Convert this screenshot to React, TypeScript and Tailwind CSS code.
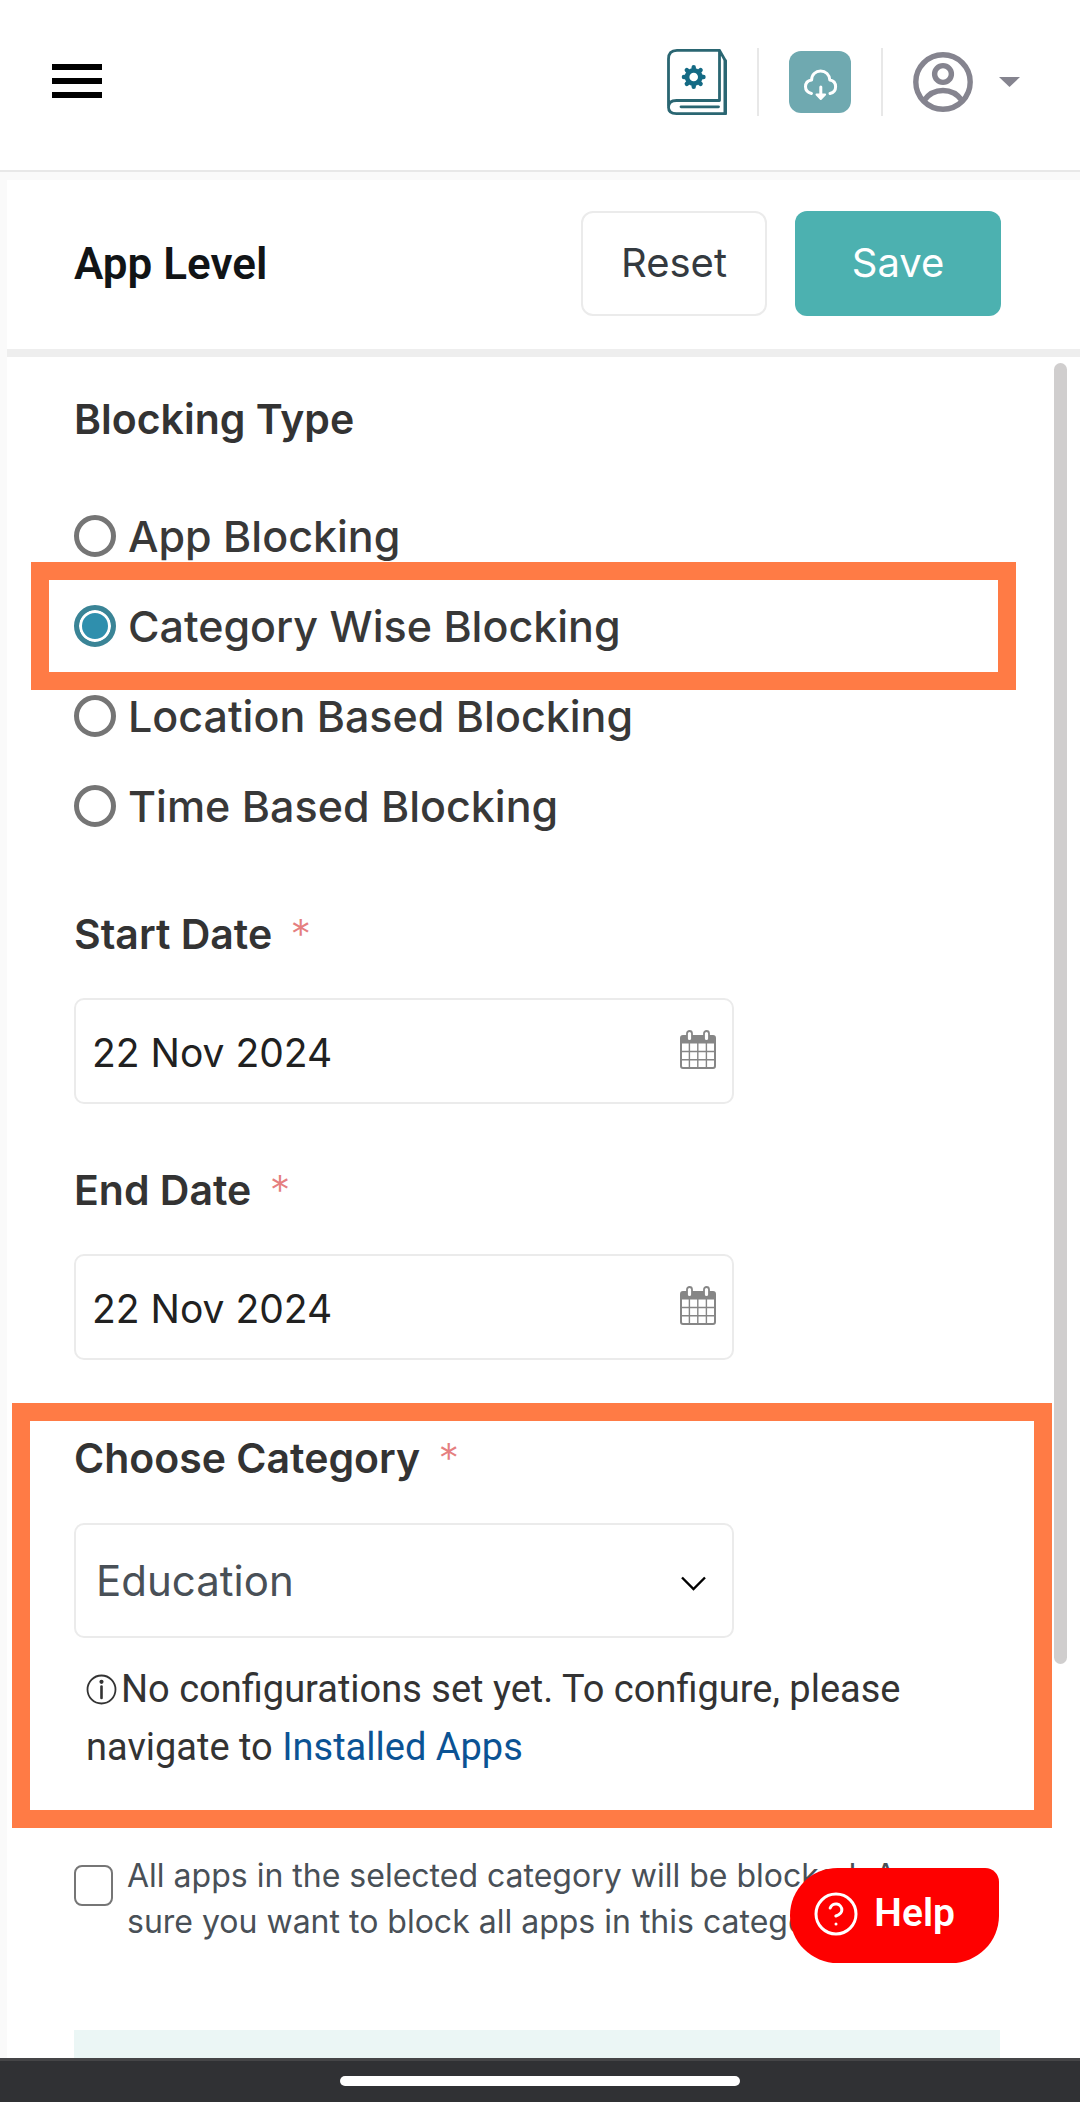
import { useState } from "react";
import { CircleQuestionMark } from "lucide-react";

const blockingTypes = [
  { id: "app", label: "App Blocking" },
  { id: "category", label: "Category Wise Blocking" },
  { id: "location", label: "Location Based Blocking" },
  { id: "time", label: "Time Based Blocking" },
];

const categories = ["Education", "Games", "Social", "Productivity"];

function GuideIcon() {
  return (
    <svg width="60" height="66" viewBox="0 0 60 66" fill="none" stroke="#2a6672" strokeWidth="2.8" strokeLinejoin="round" strokeLinecap="round">
      <path d="M1.5 57V10C1.5 4.5 4.5 1.4 10 1.4H52.5V51.5H9.5C4.5 51.5 1.5 54 1.5 58.2S4.5 64.6 9.5 64.6H58.5V12L52.5 1.4" />
      <path d="M58.2 12V64.6" strokeWidth="3.4" />
      <path d="M14 57.8H51.5" />
      <g stroke="#146a84" strokeWidth="4.4">
        <path d="M26.7 18.2V37.8M16.9 28H36.5M19.8 21.1L33.6 34.9M33.6 21.1L19.8 34.9" />
      </g>
      <circle cx="26.7" cy="28" r="9" fill="#146a84" stroke="none" />
      <circle cx="26.7" cy="28" r="4.3" fill="#fff" stroke="none" />
    </svg>
  );
}

function CloudIcon() {
  return (
    <svg width="62" height="62" viewBox="0 0 62 62" fill="none" stroke="#fff" strokeWidth="3" strokeLinecap="round" strokeLinejoin="round">
      <path d="M22.5 42.5C18.5 41.5 16.5 39 16.5 35.8C16.5 31.8 19.2 29.5 22.6 29C22.6 23.6 26.6 20 31.6 20S40.6 23.6 40.8 29C44.2 29.5 46.6 32 46.6 35.8C46.6 39.2 44.6 41.8 41 42.5" />
      <path d="M31.8 36V46" />
      <path d="M27.5 43.5L31.8 48L36.1 43.5Z" fill="#fff" strokeWidth="2" />
    </svg>
  );
}

function UserIcon() {
  return (
    <svg width="60" height="60" viewBox="0 0 60 60" fill="none" stroke="#85848f" strokeWidth="5.4">
      <circle cx="30" cy="30" r="27.2" />
      <circle cx="30" cy="22" r="8.4" />
      <path d="M11 48.5C16 41.5 23 38.5 30 38.5S44 41.5 49 48.5" />
    </svg>
  );
}

function CalendarIcon() {
  return (
    <svg width="36" height="39" viewBox="0 0 36 39" fill="none" stroke="#868686">
      <rect x="1" y="6" width="34" height="32" rx="2" strokeWidth="2" />
      <path d="M1 6H35V13.5H1Z" fill="#868686" stroke="none" />
      <path d="M9.4 13V38M17.8 13V38M26.4 13V38M1 21.5H35M1 29.7H35" strokeWidth="1.4" />
      <rect x="7" y="1" width="5" height="10" rx="2.5" fill="#fff" strokeWidth="1.8" />
      <rect x="24" y="1" width="5" height="10" rx="2.5" fill="#fff" strokeWidth="1.8" />
    </svg>
  );
}

function InfoIcon() {
  return (
    <svg className="mr-1 inline-block align-[-3px]" width="31" height="31" viewBox="0 0 31 31" fill="none" stroke="#333" strokeWidth="1.8">
      <circle cx="15.5" cy="15.5" r="14" />
      <path d="M15.5 12.5V24" strokeWidth="2.6" strokeLinecap="round" />
      <circle cx="15.5" cy="7.8" r="2.1" fill="#333" stroke="none" />
    </svg>
  );
}

function FieldLabel({ htmlFor, children }: { htmlFor: string; children: string }) {
  return (
    <label htmlFor={htmlFor} className="block text-[41px] leading-[48px] font-semibold text-[#333]">
      {children} <span className="ml-2 font-light text-[#e57f7f]">*</span>
    </label>
  );
}

function DateField({ id, label }: { id: string; label: string }) {
  const [value, setValue] = useState("22 Nov 2024");

  return (
    <div>
      <FieldLabel htmlFor={id}>{label}</FieldLabel>
      <div className="mt-10 flex h-[106px] w-full max-w-[660px] items-center rounded-[10px] border-2 border-[#ebebeb] bg-white px-4">
        <input
          id={id}
          type="text"
          value={value}
          onChange={(e) => setValue(e.target.value)}
          className="min-w-0 flex-1 pt-1 text-[39px] text-[#212121] outline-none"
        />
        <button type="button" aria-label={`Pick ${label}`} className="pb-1">
          <CalendarIcon />
        </button>
      </div>
    </div>
  );
}

export default function App() {
  const [type, setType] = useState("category");
  const [category, setCategory] = useState("Education");
  const [blockAll, setBlockAll] = useState(false);

  return (
    <div className="flex h-screen flex-col overflow-hidden bg-[#fafafa] font-['Inter',sans-serif]">
      {/* Top bar */}
      <header className="flex h-[172px] shrink-0 items-center justify-between border-b-2 border-[#e8e8e8] bg-white pr-[60px] pb-2 pl-[52px]">
        <button type="button" aria-label="Menu" className="flex w-[50px] flex-col gap-2">
          <span className="h-1.5 w-full bg-black" />
          <span className="h-1.5 w-full bg-black" />
          <span className="h-1.5 w-full bg-black" />
        </button>
        <div className="flex items-center pt-0.5">
          <button type="button" aria-label="Guide">
            <GuideIcon />
          </button>
          <span className="mx-[30px] h-[68px] w-0.5 bg-[#e8e8e8]" />
          <button type="button" aria-label="Download" className="rounded-xl bg-[#6fa9b0]">
            <CloudIcon />
          </button>
          <span className="mx-[30px] h-[68px] w-0.5 bg-[#e8e8e8]" />
          <button type="button" aria-label="Account" className="flex items-center gap-[26px]">
            <UserIcon />
            <svg width="21" height="10" viewBox="0 0 21 10">
              <path d="M0 0H21L10.5 10Z" fill="#85848f" />
            </svg>
          </button>
        </div>
      </header>

      <main className="relative mt-2 ml-[7px] flex min-h-0 flex-1 flex-col bg-white">
        {/* Title and actions */}
        <div className="flex shrink-0 items-center justify-between border-b-8 border-[#eee] pt-[31px] pr-[79px] pb-[33px] pl-[67px]">
          <h1 className="font-['Roboto',sans-serif] text-[44px] leading-[48px] font-semibold text-[#111416]">App Level</h1>
          <div className="flex gap-7">
            <button type="button" className="h-[105px] w-[186px] rounded-xl border-2 border-[#ebebeb] pb-0.5 text-[40px] text-[#343a40]">
              Reset
            </button>
            <button type="button" className="h-[105px] w-[206px] rounded-xl bg-[#4cb1b0] pb-0.5 text-[40px] text-white">
              Save
            </button>
          </div>
        </div>

        {/* Form */}
        <form className="flex min-h-0 flex-1 flex-col overflow-hidden pt-[38px] pr-20 pl-[67px]">
          <fieldset>
            <legend className="text-[41px] leading-[48px] font-semibold text-[#333]">Blocking Type</legend>
            <div className="pt-12">
              {blockingTypes.map((item) => (
                <div key={item.id} className="relative flex h-[90px] items-center">
                  <label className="flex items-center gap-3 text-[43px] leading-[48px] font-medium text-[#383838]">
                    <input
                      type="radio"
                      name="blockingType"
                      value={item.id}
                      checked={type === item.id}
                      onChange={() => setType(item.id)}
                      className="size-[42px] appearance-none rounded-full border-[5px] border-[#757575] bg-white checked:border-[#3a8496] checked:bg-[#2f8fad] checked:shadow-[inset_0_0_0_3px_white]"
                    />
                    {item.label}
                  </label>
                  {type === item.id && (
                    <div className="pointer-events-none absolute -inset-y-[19px] -right-4 -left-[43px] z-10 border-[18px] border-[#ff7b45]" />
                  )}
                </div>
              ))}
            </div>
          </fieldset>

          <div className="mt-[59px] flex flex-col gap-[62px]">
            <DateField id="startDate" label="Start Date" />
            <DateField id="endDate" label="End Date" />
          </div>

          <div className="relative mt-[74px]">
            <FieldLabel htmlFor="category">Choose Category</FieldLabel>
            <div className="relative mt-[41px] w-full max-w-[660px]">
              <select
                id="category"
                value={category}
                onChange={(e) => setCategory(e.target.value)}
                className="h-[115px] w-full appearance-none rounded-[10px] border-2 border-[#ebebeb] bg-white pr-16 pl-5 text-[42px] text-[#495057]"
              >
                {categories.map((c) => (
                  <option key={c}>{c}</option>
                ))}
              </select>
              <svg className="pointer-events-none absolute top-[53px] right-7" width="25" height="15" viewBox="0 0 25 15" fill="none" stroke="#000" strokeWidth="2.4">
                <path d="M1 1.5L12.5 13L24 1.5" />
              </svg>
            </div>
            <p className="mt-[22px] ml-3 font-['Roboto',sans-serif] text-[38px] leading-[58px] text-[#333]">
              <InfoIcon />
              No configurations set yet. To configure, please navigate to{" "}
              <a href="#" className="text-[#0b5394]">Installed Apps</a>
            </p>
            <div className="pointer-events-none absolute -top-[31px] -right-[52px] -bottom-[52px] -left-[62px] z-10 border-[18px] border-[#ff7b45]" />
          </div>

          <div className="mt-[77px] flex items-start gap-[14px]">
            <input
              id="blockAll"
              type="checkbox"
              checked={blockAll}
              onChange={(e) => setBlockAll(e.target.checked)}
              className="mt-3 h-[41px] w-[39px] shrink-0 appearance-none rounded-lg border-2 border-[#767676] checked:bg-[#2f8fad]"
            />
            <label htmlFor="blockAll" className="text-[32px] leading-[46px] text-[#495057]">
              All apps in the selected category will be blocked. Are you sure you want to block all apps in this category?
            </label>
          </div>

          <div className="mt-[85px] flex-1 bg-[#ebf6f5]" />
        </form>

        {/* Scroll thumb */}
        <div className="absolute top-[183px] right-[13px] bottom-[394px] w-[13px] rounded-full bg-[#d0cece]" />

        <button
          type="button"
          className="absolute right-[81px] bottom-[95px] z-20 flex h-[95px] items-center gap-3.5 rounded-[48px] rounded-tr-[14px] bg-[#fe0000] pr-11 pb-1 pl-[22px] font-['Roboto',sans-serif] text-[39px] font-semibold text-white"
        >
          <CircleQuestionMark size={48} strokeWidth={1.5} />
          Help
        </button>
      </main>

      {/* Gesture bar */}
      <div className="flex h-11 shrink-0 items-center justify-center border-t-[3px] border-[#454547] bg-[#303134] pb-0.5">
        <div className="h-2.5 w-[37%] rounded-full bg-white" />
      </div>
    </div>
  );
}
